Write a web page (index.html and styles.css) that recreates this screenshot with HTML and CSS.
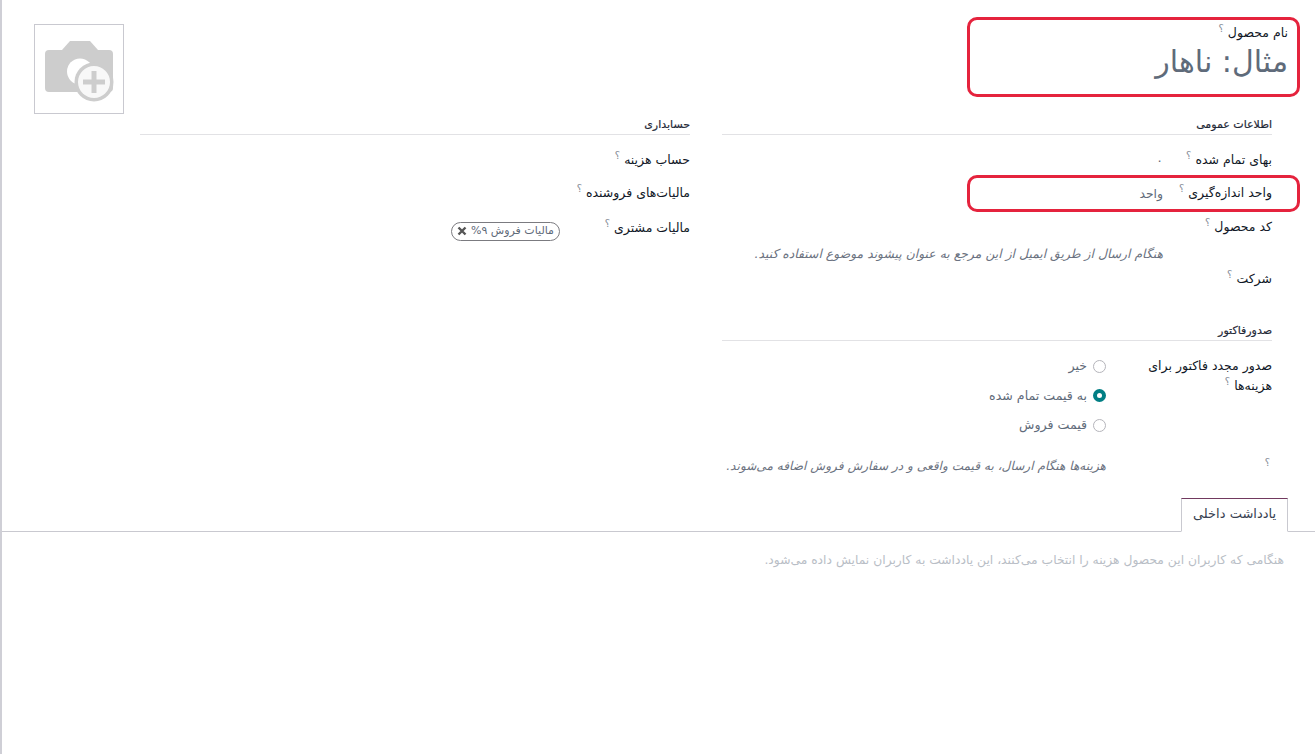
FILE: index.html
```html
<!DOCTYPE html>
<html lang="fa" dir="rtl">
<head>
<meta charset="utf-8">
<title>محصول</title>
<link rel="stylesheet" href="styles.css">
</head>
<body>
<main class="sheet">
  <header class="head">
    <div class="name-box">
      <div class="name-label">نام محصول <sup class="q">؟</sup></div>
      <div class="name-input">مثال: ناهار</div>
    </div>
    <div class="avatar">
      <svg width="88" height="88" viewBox="0 0 88 88">
        <path class="cam" d="M10 29a4 4 0 0 1 4-4h13l8-9h20l8 9h11a4 4 0 0 1 4 4v34a4 4 0 0 1-4 4H14a4 4 0 0 1-4-4z"/>
        <circle class="lens" cx="45" cy="46.500" r="13"/>
        <circle class="ring-out" cx="59" cy="57" r="19.500"/>
        <circle class="ring" cx="59" cy="57" r="16"/>
        <path class="plus" d="M56.500 46h5v8.500h8.500v5h-8.500v8.500h-5v-8.500h-8.500v-5h8.500z"/>
      </svg>
    </div>
  </header>

  <div class="cols">
    <section class="col">
      <h3 class="sec">اطلاعات عمومی</h3>
      <div class="row r1">
        <div class="lab">بهای تمام شده <sup class="q">؟</sup></div>
        <div class="val">۰</div>
      </div>
      <div class="row r2">
        <div class="lab">واحد اندازه‌گیری <sup class="q">؟</sup></div>
        <div class="val">واحد</div>
        <span class="mark"></span>
      </div>
      <div class="row r3">
        <div class="lab">کد محصول <sup class="q">؟</sup></div>
        <div class="val"></div>
      </div>
      <div class="row hint-row">
        <div class="lab"></div>
        <div class="hint">هنگام ارسال از طریق ایمیل از این مرجع به عنوان پیشوند موضوع استفاده کنید.</div>
      </div>
      <div class="row r4">
        <div class="lab">شرکت <sup class="q">؟</sup></div>
        <div class="val"></div>
      </div>

      <h3 class="sec sec2">صدورفاکتور</h3>
      <div class="row reinv">
        <div class="lab lab-wide"><span class="wrap">صدور مجدد فاکتور برای هزینه‌ها <sup class="q">؟</sup></span></div>
        <div class="radios">
          <label class="radio"><span class="dot"></span>خیر</label>
          <label class="radio"><span class="dot on"></span>به قیمت تمام شده</label>
          <label class="radio"><span class="dot"></span>قیمت فروش</label>
        </div>
      </div>
      <div class="row note-row">
        <div class="lab lab-wide"><sup class="q q-solo">؟</sup></div>
        <div class="hint hint-note">هزینه‌ها هنگام ارسال، به قیمت واقعی و در سفارش فروش اضافه می‌شوند.</div>
      </div>
    </section>

    <section class="col">
      <h3 class="sec">حسابداری</h3>
      <div class="row r1">
        <div class="lab">حساب هزینه <sup class="q">؟</sup></div>
      </div>
      <div class="row r2">
        <div class="lab lab-auto">مالیات‌های فروشنده <sup class="q">؟</sup></div>
      </div>
      <div class="row tax-row">
        <div class="lab">مالیات مشتری <sup class="q">؟</sup></div>
        <div class="tag-wrap">
          <span class="tag">مالیات فروش ۹%
            <svg class="x" width="10" height="10" viewBox="0 0 10 10"><path d="M1.500 1.500l7 7m0-7l-7 7"/></svg>
          </span>
        </div>
      </div>
    </section>
  </div>

  <nav class="tabs">
    <div class="tab">یادداشت داخلی</div>
  </nav>
  <div class="pane">هنگامی که کاربران این محصول هزینه را انتخاب می‌کنند، این یادداشت به کاربران نمایش داده می‌شود.</div>
</main>
</body>
</html>
```
FILE: styles.css
```css
* { box-sizing: border-box; }
html, body { margin: 0; height: 100%; background: #fff; }
body {
  font-family: "DejaVu Sans", "Noto Sans", sans-serif;
  font-size: 12.400px;
  line-height: 18px;
  color: #111827;
  overflow: hidden;
}
.sheet {
  height: 754px;
  border-left: 2px solid #cfcfd6;
  display: flex;
  flex-direction: column;
}
.head {
  display: flex;
  justify-content: space-between;
  align-items: flex-start;
  padding: 17px 15px 0 32px;
  height: 115px;
}
.name-box {
  width: 333px;
  height: 80px;
  border: 3px solid #e5233d;
  border-radius: 10px;
  padding: 2px 9px 0;
}
.name-label { font-size: 12.500px; line-height: 22px; }
.name-input { font-size: 30px; line-height: 38px; color: #5f6b7a; margin-top: -1px; }
.q { font-size: 10px; line-height: 0; color: #868c96; vertical-align: 5px; font-weight: 400; }
.avatar {
  width: 90px;
  height: 90px;
  margin-top: 7px;
  border: 1px solid #c9c9d0;
}
.avatar svg { display: block; }
.cam { fill: #cdcdcd; }
.lens { fill: #fff; }
.ring-out { fill: #cdcdcd; }
.ring { fill: #f8f8f8; }
.plus { fill: #cdcdcd; }
.cols {
  display: flex;
  gap: 32px;
  padding: 0 43px 0 138px;
  height: 383px;
}
.col { width: 550px; }
.sec {
  margin: 0;
  height: 20px;
  padding-top: 1px;
  font-size: 11px;
  line-height: 18px;
  font-weight: 400;
  color: #1f2937;
  -webkit-text-stroke: 0.2px #1f2937;
  border-bottom: 1px solid #e2e2e5;
}
.sec2 { margin-top: 30px; }
.row { display: flex; position: relative; }
.lab { width: 109px; flex: none; font-size: 12.500px; padding-top: 1px; white-space: nowrap; }
.lab-auto { width: auto; }
.lab-wide { width: 166px; white-space: normal; }
.wrap { display: block; width: 130px; line-height: 20px; margin-top: -2px; }
.val { color: #5f6b7a; padding-top: 2px; }
.r1 { margin-top: 15px; height: 33px; }
.r2 { height: 34px; }
.r3 { height: 28px; }
.hint-row { height: 24px; }
.r4 { height: 22px; }
.hint { font-style: italic; color: #6b7280; white-space: nowrap; }
.hint-note { font-size: 12.150px; }
.mark {
  position: absolute;
  right: -28px;
  top: -8px;
  width: 333px;
  height: 37px;
  border: 3px solid #e5233d;
  border-radius: 10px;
}
.reinv { margin-top: 16px; height: 92px; }
.radios { display: flex; flex-direction: column; gap: 11.500px; color: #5f6b7a; font-size: 12.600px; }
.radio { display: flex; align-items: center; gap: 6px; height: 18px; }
.dot {
  width: 13px;
  height: 13px;
  border-radius: 50%;
  border: 1px solid #b5b5bb;
  background: #fff;
}
.dot.on { border: 4px solid #017e84; }
.note-row { margin-top: 8px; }
.q-solo { margin-right: 2px; }
.tax-row { margin-top: 1px; }
.tag-wrap { margin-right: 21px; margin-top: 3px; }
.tag {
  display: inline-flex;
  align-items: center;
  gap: 4px;
  height: 19px;
  padding: 0 5px;
  border: 1px solid #7b7b80;
  border-radius: 10px;
  font-size: 11px;
  color: #5f6b7a;
  white-space: nowrap;
}
.x { stroke: #555; stroke-width: 2.400; fill: none; }
.tabs {
  height: 34px;
  padding-right: 27px;
  border-bottom: 1px solid #c9c9d0;
  display: flex;
}
.tab {
  width: 107px;
  height: 34px;
  border: 1px solid #c9c9d0;
  border-top-color: #71395f;
  border-bottom: 1px solid #fff;
  background: #fff;
  text-align: center;
  font-size: 13px;
  line-height: 30px;
  color: #374151;
}
.pane {
  padding: 19px 31px 0 0;
  font-size: 12.300px;
  color: #b9bec6;
}
```
